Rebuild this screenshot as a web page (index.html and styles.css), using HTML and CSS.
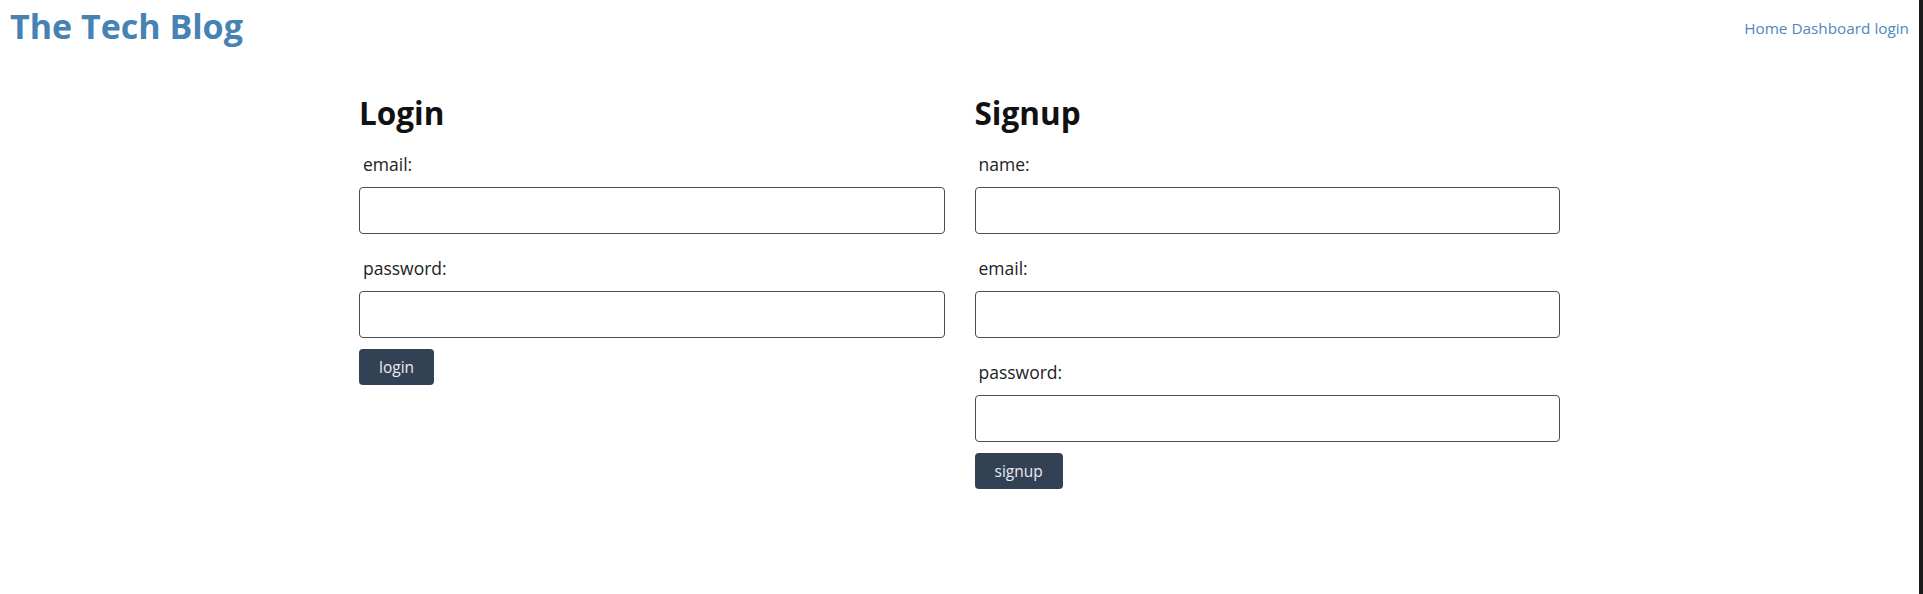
FILE: index.html
```html
<!DOCTYPE html>
<html lang="en">
<head>
<meta charset="utf-8">
<title>The Tech Blog</title>
<link rel="stylesheet" href="styles.css">
</head>
<body>
<div class="page">
  <header class="site-header">
    <h1 class="brand">The Tech Blog</h1>
    <nav class="nav">
      <a href="#">Home</a>
      <a href="#">Dashboard</a>
      <a href="#">login</a>
    </nav>
  </header>
  <main class="forms">
    <section class="form-col">
      <h2 class="form-title">Login</h2>
      <form class="form">
        <label class="field-label" for="login-email">email:</label>
        <input class="field-input" id="login-email" type="text">
        <label class="field-label" for="login-password">password:</label>
        <input class="field-input" id="login-password" type="password">
        <button class="btn" type="button">login</button>
      </form>
    </section>
    <section class="form-col">
      <h2 class="form-title">Signup</h2>
      <form class="form">
        <label class="field-label" for="signup-name">name:</label>
        <input class="field-input" id="signup-name" type="text">
        <label class="field-label" for="signup-email">email:</label>
        <input class="field-input" id="signup-email" type="text">
        <label class="field-label" for="signup-password">password:</label>
        <input class="field-input" id="signup-password" type="password">
        <button class="btn" type="button">signup</button>
      </form>
    </section>
  </main>
</div>
</body>
</html>
```

FILE: styles.css
```css
* {
  box-sizing: border-box;
}

html, body {
  margin: 0;
  padding: 0;
  background: #ffffff;
}

body {
  font-family: "Open Sans", "Noto Sans", Arial, sans-serif;
  color: #1f1f1f;
}

.page {
  min-height: 100vh;
  border-right: 4px solid #1b1b1b;
}

.site-header {
  display: flex;
  justify-content: space-between;
  align-items: flex-start;
  padding: 0 10px;
  height: 52px;
}

.brand {
  margin: 0;
  font-size: 34px;
  line-height: 52px;
  font-weight: 700;
  color: #4682b4;
}

.nav {
  display: flex;
  gap: 4px;
  padding-top: 17px;
  font-size: 15.3px;
  line-height: 22px;
}

.nav a {
  color: #4f86c0;
  text-decoration: none;
}

.forms {
  max-width: 1201px;
  margin: 0 auto;
  padding-top: 43px;
  display: grid;
  grid-template-columns: 1fr 1fr;
  column-gap: 30px;
  align-items: start;
}

.form-title {
  margin: 0 0 21px;
  font-size: 31.5px;
  line-height: 36px;
  font-weight: 700;
  color: #111111;
}

.form {
  display: flex;
  flex-direction: column;
  align-items: flex-start;
}

.field-label {
  display: block;
  padding-left: 4px;
  font-size: 17.5px;
  line-height: 24px;
  color: #222222;
  margin-bottom: 11px;
}

.field-input {
  width: 100%;
  height: 47px;
  border: 1px solid #4d4d4d;
  border-radius: 4px;
  background: #ffffff;
  margin: 0 0 22px;
  font: inherit;
}

.field-input:last-of-type {
  margin-bottom: 11px;
}

.btn {
  height: 36px;
  padding: 0 20px;
  border: none;
  border-radius: 4px;
  background: #334155;
  color: #e8ecf2;
  font-family: "Open Sans", "Noto Sans", Arial, sans-serif;
  font-size: 15.5px;
  line-height: 36px;
  cursor: pointer;
}
```
